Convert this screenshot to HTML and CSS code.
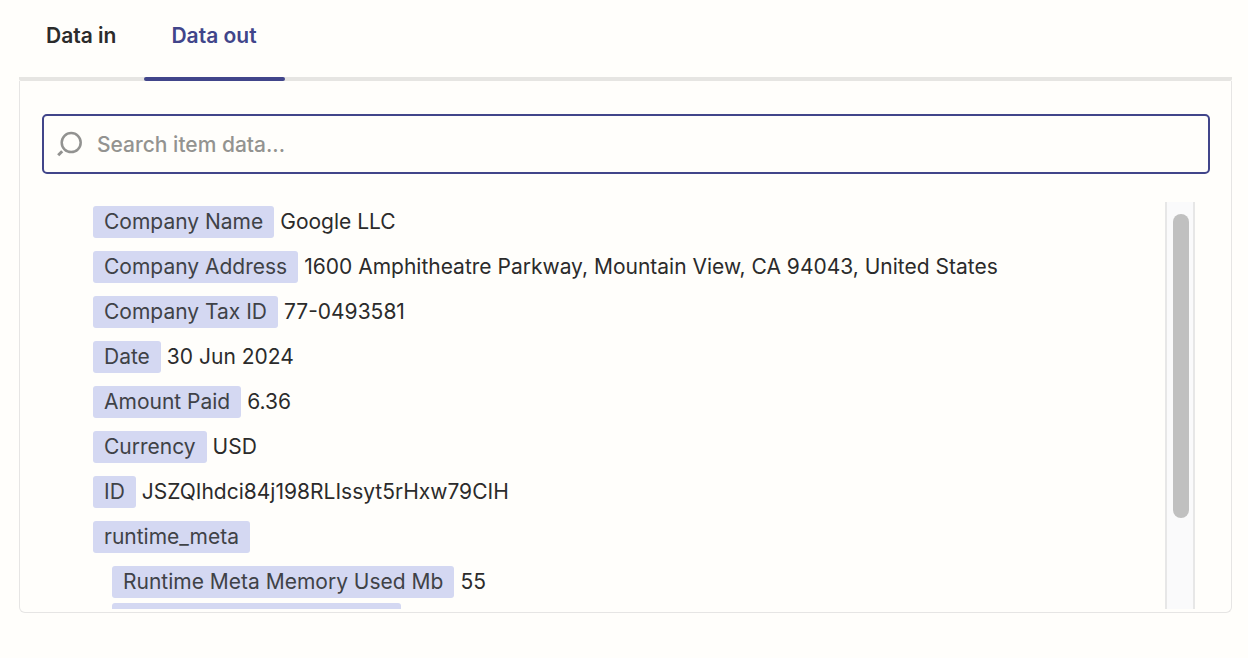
FILE: index.html
```html
<!DOCTYPE html>
<html lang="en">
<head>
  <meta charset="UTF-8">
  <meta name="viewport" content="width=device-width, initial-scale=1.0">
  <title>Data out</title>
  <link rel="stylesheet" href="styles.css">
</head>
<body>

  <div class="tabs" role="tablist">
    <button type="button" class="tab" role="tab" aria-selected="false">Data in</button>
    <button type="button" class="tab active" role="tab" aria-selected="true">Data out</button>
  </div>

  <div class="panel" role="tabpanel">
    <label class="search">
      <svg class="search-icon" viewBox="0 0 28 28" fill="none" stroke="#929290" stroke-width="2.5" aria-hidden="true">
        <circle cx="15.2" cy="12.6" r="9.5"/>
        <path d="M6.2 21.2 L2.2 25.2" stroke-width="3"/>
      </svg>
      <input type="text" class="search-input" placeholder="Search item data..." aria-label="Search item data">
    </label>

    <div class="results">
      <ul class="items">
        <li><span class="key">Company Name</span><span>Google LLC</span></li>
        <li><span class="key">Company Address</span><span>1600 Amphitheatre Parkway, Mountain View, CA 94043, United States</span></li>
        <li><span class="key">Company Tax ID</span><span>77-0493581</span></li>
        <li><span class="key">Date</span><span>30 Jun 2024</span></li>
        <li><span class="key">Amount Paid</span><span>6.36</span></li>
        <li><span class="key">Currency</span><span>USD</span></li>
        <li><span class="key">ID</span><span>JSZQIhdci84j198RLIssyt5rHxw79CIH</span></li>
        <li><span class="key">runtime_meta</span></li>
        <li class="nested"><span class="key">Runtime Meta Memory Used Mb</span><span>55</span></li>
        <li class="nested tight"><span class="key key-next"></span></li>
      </ul>
      <div class="scroll-track">
        <div class="scroll-thumb"></div>
      </div>
    </div>
  </div>

</body>
</html>
```
FILE: styles.css
```css
* {
  box-sizing: border-box;
}

body {
  margin: 0;
  padding: 0 16px 0 19px;
  font-family: Inter, "Liberation Sans", sans-serif;
  font-size: 21px;
  font-optical-sizing: none;
  color: #2b2b2b;
  background-color: #fffefb;
}

/* Tabs */
.tabs {
  display: flex;
  height: 81px;
  background: linear-gradient(#e6e5e2, #e6e5e2) bottom / 100% 4px no-repeat;
  border-radius: 2px;
}

.tab {
  position: relative;
  padding: 0 28px 11px 27px;
  border: none;
  background: none;
  font-family: inherit;
  font-size: 21px;
  font-weight: 600;
  color: #2b2b2b;
  cursor: pointer;
}

.tab.active {
  color: #41458a;
}

.tab.active::after {
  content: "";
  position: absolute;
  left: 0;
  right: 0;
  bottom: 0;
  height: 4px;
  border-radius: 2px;
  background-color: #41458a;
}

/* Panel */
.panel {
  padding: 33px 21px 3px 22px;
  border: 1px solid #e6e5e4;
  border-top: none;
  border-radius: 0 0 6px 6px;
}

.search {
  display: flex;
  align-items: center;
  gap: 13px;
  height: 60px;
  padding: 0 12px;
  border: 2px solid #41458a;
  border-radius: 5px;
}

.search-icon {
  flex: none;
  width: 28px;
  height: 28px;
}

.search-input {
  flex: 1;
  min-width: 0;
  padding: 0;
  border: none;
  outline: none;
  background: none;
  font-family: inherit;
  font-size: 21px;
  font-weight: 500;
  color: #2b2b2b;
}

.search-input::placeholder {
  color: #939390;
  opacity: 1;
}

/* Item data */
.results {
  display: flex;
  height: 407px;
  margin-top: 28px;
  padding-right: 15px;
  overflow: hidden;
}

.items {
  flex: 1;
  margin: 0;
  padding: 4px 0 0 51px;
  list-style: none;
}

.items li {
  display: flex;
  gap: 6px;
  margin-bottom: 13px;
  line-height: 32px;
}

.items .nested {
  padding-left: 19px;
}

.items .tight {
  margin-top: -8px;
}

.key {
  padding: 0 11px;
  border-radius: 3px;
  color: #3f4247;
  background-color: #d4d8f2;
}

.key-next {
  width: 289px;
  height: 32px;
}

.scroll-track {
  width: 30px;
  padding: 12px 4px 12px 6px;
  border: solid #e7e7e7;
  border-width: 0 2px;
  background-color: #fafafb;
}

.scroll-thumb {
  height: 304px;
  border-radius: 8px;
  background-color: #c0c0c0;
}
```
